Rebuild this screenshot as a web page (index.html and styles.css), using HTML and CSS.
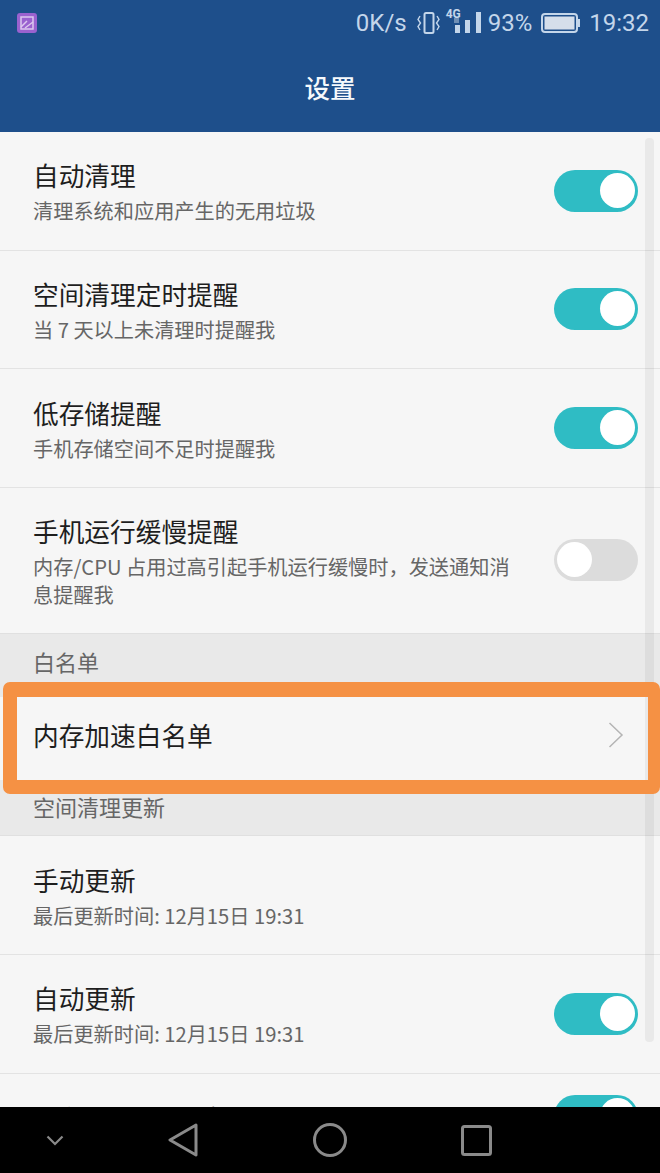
FILE: index.html
```html
<!DOCTYPE html>
<html lang="zh-CN">
<head>
    <meta charset="UTF-8">
    <title>设置</title>
    <link rel="stylesheet" href="styles.css">
</head>
<body>
    <div class="phone">
        <div class="header">
            <div class="status-bar">
                <svg class="app-icon" width="22" height="22" viewBox="0 0 22 22">
                    <rect x="1" y="1" width="20" height="20" rx="3" fill="#9a62cf"/>
                    <rect x="5" y="5" width="12" height="12" fill="none" stroke="#dcc8ef" stroke-width="1.5"/>
                    <path d="M5 15 L11 9 M9 16 L17 10" stroke="#dcc8ef" stroke-width="1.5" fill="none"/>
                </svg>
                <div class="status-right">
                    <span class="speed">0K/s</span>
                    <svg width="25" height="22" viewBox="0 0 25 22" fill="none" stroke="#c4d6ea" stroke-width="2">
                        <rect x="8.5" y="1" width="9" height="20" rx="1.5"/>
                        <path d="M4 4 L2 7.5 L4.5 11 L2 14.5 L4 18" stroke-width="1.4"/>
                        <path d="M21 4 L23 7.5 L20.5 11 L23 14.5 L21 18" stroke-width="1.4"/>
                    </svg>
                    <span class="signal">
                        <span class="net">4G</span>
                        <svg width="35" height="30" viewBox="0 0 35 30" fill="#c4d6ea">
                            <rect x="9" y="17" width="5" height="8"/>
                            <rect x="19" y="12" width="5" height="13"/>
                            <rect x="30" y="4" width="5" height="21"/>
                            <rect x="8" y="10" width="5" height="5" fill="#6f8fb5"/>
                        </svg>
                    </span>
                    <span class="percent">93%</span>
                    <svg class="battery" width="40" height="22" viewBox="0 0 40 22">
                        <rect x="1" y="2" width="35" height="18" rx="3" fill="none" stroke="#c4d6ea" stroke-width="2"/>
                        <rect x="3.5" y="4.5" width="30" height="13" fill="#d5deea"/>
                        <rect x="37" y="7" width="2" height="8" fill="#c4d6ea"/>
                    </svg>
                    <span class="clock">19:32</span>
                </div>
            </div>
            <div class="title-bar">设置</div>
        </div>

        <div class="list">
            <div class="row">
                <div class="row-text">
                    <div class="row-title">自动清理</div>
                    <div class="row-sub">清理系统和应用产生的无用垃圾</div>
                </div>
                <div class="switch on"></div>
            </div>
            <div class="row">
                <div class="row-text">
                    <div class="row-title">空间清理定时提醒</div>
                    <div class="row-sub">当 7 天以上未清理时提醒我</div>
                </div>
                <div class="switch on"></div>
            </div>
            <div class="row">
                <div class="row-text">
                    <div class="row-title">低存储提醒</div>
                    <div class="row-sub">手机存储空间不足时提醒我</div>
                </div>
                <div class="switch on"></div>
            </div>
            <div class="row row-tall">
                <div class="row-text">
                    <div class="row-title">手机运行缓慢提醒</div>
                    <div class="row-sub">内存/CPU 占用过高引起手机运行缓慢时，发送通知消息提醒我</div>
                </div>
                <div class="switch"></div>
            </div>
            <div class="section section-first">白名单</div>
            <div class="row row-link">
                <div class="row-title">内存加速白名单</div>
                <svg class="chevron" width="16" height="26" viewBox="0 0 16 26" fill="none" stroke="#b4b4b4" stroke-width="1.5">
                    <path d="M1.5 1 L14 13 L1.5 25"/>
                </svg>
            </div>
            <div class="section section-second">空间清理更新</div>
            <div class="row">
                <div class="row-text">
                    <div class="row-title">手动更新</div>
                    <div class="row-sub">最后更新时间: 12月15日 19:31</div>
                </div>
            </div>
            <div class="row">
                <div class="row-text">
                    <div class="row-title">自动更新</div>
                    <div class="row-sub">最后更新时间: 12月15日 19:31</div>
                </div>
                <div class="switch on"></div>
            </div>
            <div class="row row-short">
                <div class="row-title">仅在WLAN下更新</div>
                <div class="switch on"></div>
            </div>
            <div class="scrollbar"></div>
        </div>

        <div class="nav-bar">
            <svg class="nav-hide" width="18" height="11" viewBox="0 0 18 11" fill="none" stroke="#8a8a8a" stroke-width="2.2">
                <path d="M1.5 1.5 L9 9 L16.5 1.5"/>
            </svg>
            <svg class="nav-back" width="30" height="34" viewBox="0 0 30 34" fill="none" stroke="#8a8a8a" stroke-width="3" stroke-linejoin="round">
                <path d="M28 2 L2 17 L28 32 Z"/>
            </svg>
            <svg class="nav-home" width="34" height="34" viewBox="0 0 34 34" fill="none" stroke="#8a8a8a" stroke-width="3">
                <circle cx="17" cy="17" r="15.5"/>
            </svg>
            <svg class="nav-recent" width="31" height="31" viewBox="0 0 31 31" fill="none" stroke="#8a8a8a" stroke-width="3" stroke-linejoin="round">
                <rect x="1.5" y="1.5" width="28" height="28" rx="2"/>
            </svg>
        </div>

        <div class="highlight"></div>
    </div>
</body>
</html>
```

FILE: styles.css
```css
body {
    margin: 0;
    font-family: "Noto Sans CJK SC", "Roboto", sans-serif;
    background: #f6f6f6;
}
.phone {
    position: relative;
    width: 660px;
    height: 1173px;
    display: flex;
    flex-direction: column;
    overflow: hidden;
}
.header {
    height: 132px;
    flex-shrink: 0;
    background: #1e4f8b;
}
.status-bar {
    height: 46px;
    display: flex;
    align-items: center;
    justify-content: space-between;
    padding: 0 11px 0 16px;
}
.status-right {
    display: flex;
    align-items: center;
    gap: 5px;
    font-family: Roboto, sans-serif;
    font-size: 24px;
    color: #c4d6ea;
}
.speed {
    margin-right: 4px;
}
.signal {
    position: relative;
    display: flex;
}
.net {
    position: absolute;
    left: 0;
    top: -1px;
    font-size: 12px;
    font-weight: 700;
}
.percent {
    margin-left: 2px;
}
.battery {
    margin: 0 3px 0 4px;
}
.title-bar {
    height: 86px;
    box-sizing: border-box;
    padding-bottom: 5px;
    display: flex;
    align-items: center;
    justify-content: center;
    font-size: 25.5px;
    font-weight: 500;
    color: #f6f9fc;
}
.list {
    position: relative;
    flex: 1;
    overflow: hidden;
}
.row {
    height: 118.67px;
    box-sizing: border-box;
    display: flex;
    align-items: center;
    justify-content: space-between;
    padding: 0 22px 0 33px;
    border-bottom: 1px solid #e3e3e3;
}
.row-text {
    width: 490px;
}
.row-tall {
    height: 145px;
    border-bottom: none;
    align-items: flex-start;
}
.row-tall .row-text {
    padding-top: 24px;
}
.row-tall .switch {
    margin-top: 51px;
}
.row-title {
    font-size: 25.7px;
    line-height: 38px;
    color: #1e1e1e;
}
.row-sub {
    margin-top: 3px;
    font-size: 20.2px;
    line-height: 28px;
    color: #666;
}
.row-link {
    height: 83px;
    border-bottom: none;
    padding-right: 36px;
    padding-bottom: 6px;
}
.row-short {
    height: 84px;
    border-bottom: none;
}
.row-short .row-title {
    padding-top: 5px;
}
.section {
    box-sizing: border-box;
    background: #e9e9e9;
    border-top: 1px solid #e0e0e0;
    padding-left: 33px;
    font-size: 22px;
    color: #666;
}
.section-first {
    height: 64px;
    padding-top: 9px;
    line-height: 36px;
}
.section-second {
    height: 56.5px;
    padding-top: 8px;
    line-height: 36px;
    border-top: none;
    border-bottom: 1px solid #e0e0e0;
}
.switch {
    position: relative;
    flex-shrink: 0;
    width: 84px;
    height: 42px;
    border-radius: 21px;
    background: #dcdcdc;
}
.switch::after {
    content: "";
    position: absolute;
    left: 3px;
    top: 3px;
    width: 35px;
    height: 35px;
    border-radius: 50%;
    background: #fff;
}
.switch.on {
    background: #2fbcc4;
}
.switch.on::after {
    left: 46px;
}
.scrollbar {
    position: absolute;
    right: 6px;
    top: 6px;
    width: 9px;
    height: 904px;
    border-radius: 4px;
    background: rgba(0, 0, 0, 0.05);
}
.nav-bar {
    height: 66px;
    flex-shrink: 0;
    display: flex;
    align-items: center;
    background: #000;
}
.nav-hide {
    margin-left: 46px;
}
.nav-back {
    margin-left: 104px;
}
.nav-home {
    margin-left: 115px;
}
.nav-recent {
    margin-left: 114px;
}
.highlight {
    position: absolute;
    left: 3px;
    top: 682px;
    width: 631px;
    height: 83px;
    border: 14px solid #f59144;
    border-top-width: 15px;
    border-right-width: 12px;
    border-radius: 7px;
}
```
